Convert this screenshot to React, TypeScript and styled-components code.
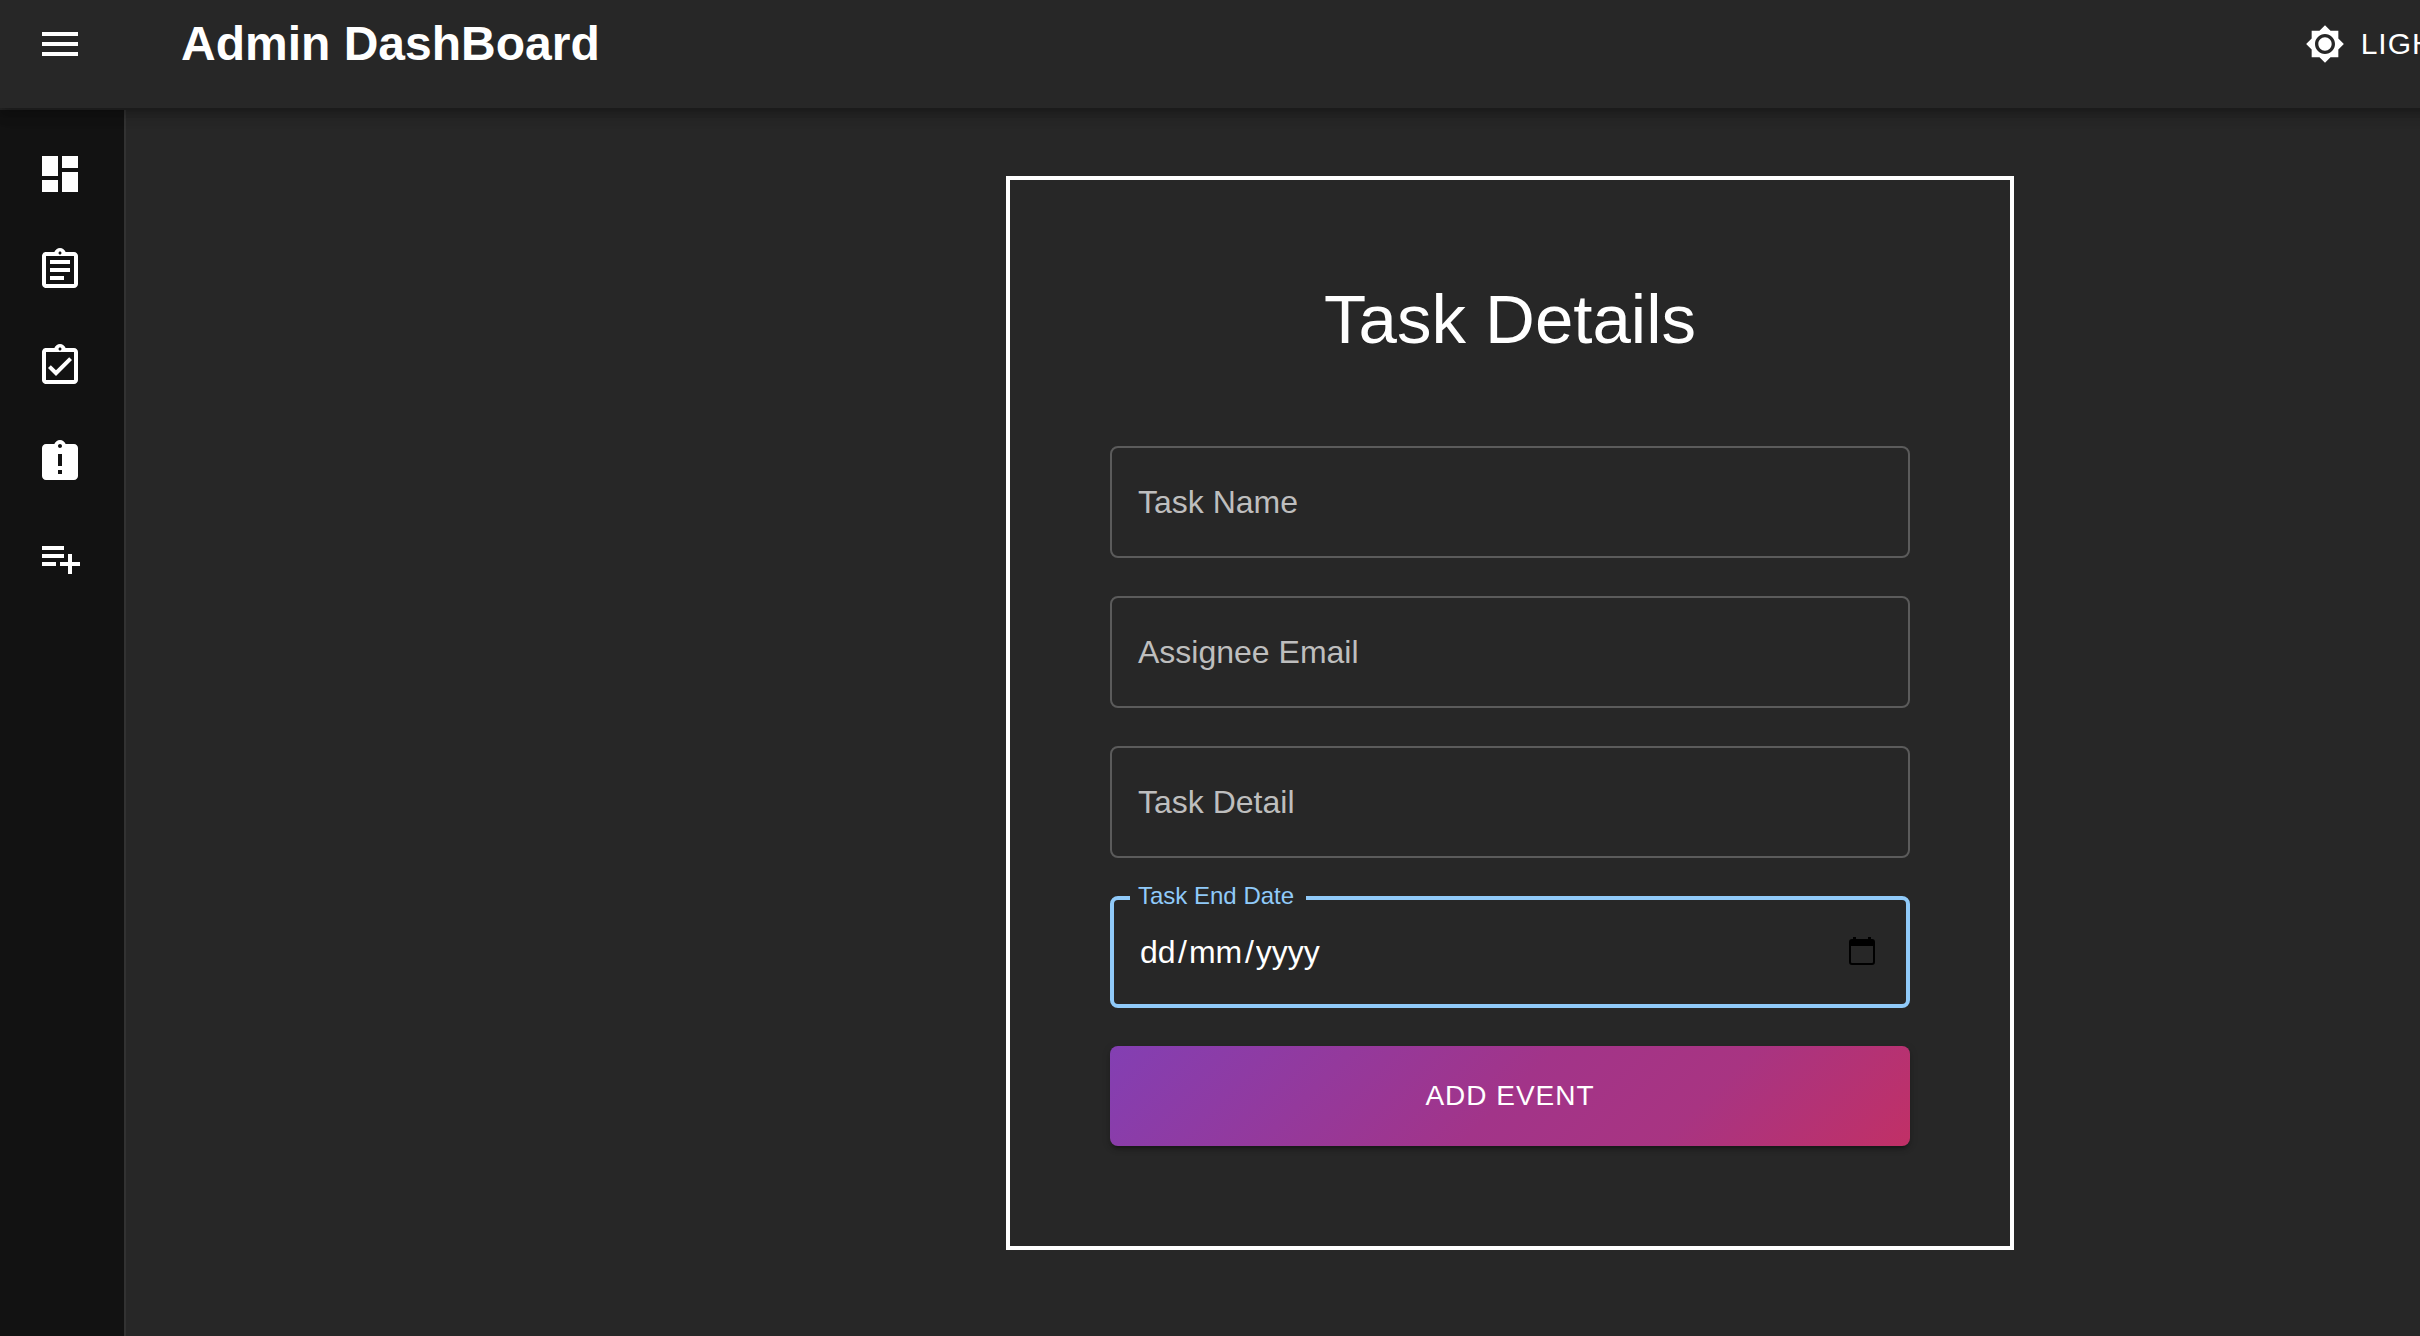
import React from 'react';
import styled, { createGlobalStyle } from 'styled-components';
import {
  MdAssignmentLate,
  MdBrightness7,
  MdDashboard,
  MdMenu,
  MdOutlineAssignment,
  MdOutlineAssignmentTurnedIn,
  MdPlaylistAdd,
} from 'react-icons/md';

const surface = '#272727';
const accent = '#90caf9';

const GlobalStyle = createGlobalStyle`
  *, *::before, *::after { box-sizing: border-box; }
  body {
    margin: 0;
    background: ${surface};
    color: #fff;
    font-family: "Liberation Sans", Arial, Helvetica, sans-serif;
    overflow-x: hidden;
  }
  button, input { font: inherit; color: inherit; }
`;

const Shell = styled.div`
  display: flex;
  flex-direction: column;
  width: 120%;
  min-height: 100vh;
`;

const Header = styled.header`
  display: flex;
  align-items: center;
  gap: 97px;
  height: 108px;
  padding: 0 450px 20px 36px;
  background: ${surface};
  box-shadow: 0 4px 8px -2px rgba(0, 0, 0, 0.2), 0 8px 10px 0 rgba(0, 0, 0, 0.14),
    0 2px 20px 0 rgba(0, 0, 0, 0.12);
  z-index: 1;
`;

const Brand = styled.h1`
  flex: 1;
  margin: 0;
  font-size: 48px;
  line-height: 64px;
`;

const PlainButton = styled.button`
  display: flex;
  align-items: center;
  padding: 0;
  border: 0;
  background: none;
  cursor: pointer;
`;

const ModeButton = styled(PlainButton)`
  gap: 16px;
  font-size: 30px;
  line-height: 52px;
  letter-spacing: 1px;
  white-space: nowrap;
`;

const Body = styled.div`
  display: flex;
  flex: 1;
  padding-top: 2px;
`;

const Sidebar = styled.nav`
  display: flex;
  flex-direction: column;
  gap: 48px;
  width: 126px;
  padding: 40px 36px;
  background: #121212;
  border-right: 2px solid #323232;
`;

const NavLink = styled.a`
  display: flex;
  color: inherit;
`;

const Main = styled.main`
  display: flex;
  flex: 1;
  justify-content: center;
  align-items: flex-start;
  padding: 66px 10px 66px 0;
`;

const Card = styled.form`
  display: flex;
  flex-direction: column;
  gap: 38px;
  width: 1008px;
  padding: 100px;
  border: 4px solid #fff;
`;

const CardTitle = styled.h2`
  margin: 0 0 48px;
  font-size: 69px;
  font-weight: 400;
  line-height: 80px;
  text-align: center;
`;

const Field = styled.div<{ $active?: boolean }>`
  position: relative;
  display: flex;
  align-items: center;
  height: 112px;
  padding: 0 ${(p) => (p.$active ? 24 : 26)}px;
  border: ${(p) => (p.$active ? `4px solid ${accent}` : '2px solid #5b5b5b')};
  border-radius: 8px;
`;

const FieldLabel = styled.label`
  position: absolute;
  left: 26px;
  color: #bebebe;
  font-size: 32px;
  line-height: 46px;
  pointer-events: none;
`;

const FloatingLabel = styled.label`
  position: absolute;
  top: -20px;
  left: 16px;
  padding: 0 12px 0 8px;
  background: ${surface};
  color: ${accent};
  font-size: 24px;
  line-height: 32px;
`;

const FieldInput = styled.input`
  flex: 1;
  min-width: 0;
  height: 46px;
  padding: 0;
  border: 0;
  outline: 0;
  background: none;
  font-size: 32px;
`;

const DateEdit = styled.div`
  display: flex;
  flex: 1;
  align-items: center;
  font-size: 32px;
  line-height: 46px;
`;

const DatePart = styled.input<{ $width: number }>`
  width: ${(p) => p.$width}px;
  height: 46px;
  padding: 0 2px;
  border: 0;
  outline: 0;
  background: none;

  &::placeholder {
    color: #fff;
    opacity: 1;
  }
`;

const PickerButton = styled(PlainButton)`
  padding: 4px;
  color: #000;
`;

const SubmitButton = styled.button`
  height: 100px;
  border: 0;
  border-radius: 8px;
  background: linear-gradient(135deg, #833fb3 0%, #a23489 50%, #a83482 72%, #c13066 100%);
  box-shadow: 0 6px 2px -4px rgba(0, 0, 0, 0.2), 0 4px 4px 0 rgba(0, 0, 0, 0.14),
    0 2px 10px 0 rgba(0, 0, 0, 0.12);
  font-size: 28px;
  letter-spacing: 1px;
  cursor: pointer;
`;

const navItems = [
  { label: 'Dashboard', Icon: MdDashboard },
  { label: 'All tasks', Icon: MdOutlineAssignment },
  { label: 'Completed tasks', Icon: MdOutlineAssignmentTurnedIn },
  { label: 'Overdue tasks', Icon: MdAssignmentLate },
  { label: 'Add task', Icon: MdPlaylistAdd },
];

const fields = [
  { id: 'task-name', label: 'Task Name', type: 'text' },
  { id: 'assignee-email', label: 'Assignee Email', type: 'email' },
  { id: 'task-detail', label: 'Task Detail', type: 'text' },
];

const CalendarIcon = () => (
  <svg width="32" height="32" viewBox="0 0 32 32" fill="none" aria-hidden="true">
    <path d="M8.5 1v4M23.5 1v4" stroke="currentColor" strokeWidth="3" />
    <rect x="4" y="4" width="24" height="24" rx="2" stroke="currentColor" strokeWidth="2" />
    <path d="M4 4h24v6H4z" fill="currentColor" />
  </svg>
);

export default function App() {
  return (
    <>
      <GlobalStyle />
      <Shell>
        <Header>
          <PlainButton type="button" aria-label="Open menu">
            <MdMenu size={48} />
          </PlainButton>
          <Brand>Admin DashBoard</Brand>
          <ModeButton type="button">
            <MdBrightness7 size={40} />
            LIGHT
          </ModeButton>
        </Header>
        <Body>
          <Sidebar aria-label="Main">
            {navItems.map(({ label, Icon }) => (
              <NavLink key={label} href="#" aria-label={label}>
                <Icon size={48} />
              </NavLink>
            ))}
          </Sidebar>
          <Main>
            <Card onSubmit={(event) => event.preventDefault()}>
              <CardTitle>Task Details</CardTitle>
              {fields.map(({ id, label, type }) => (
                <Field key={id}>
                  <FieldLabel htmlFor={id}>{label}</FieldLabel>
                  <FieldInput id={id} type={type} />
                </Field>
              ))}
              <Field $active>
                <FloatingLabel htmlFor="task-end-date">Task End Date</FloatingLabel>
                <DateEdit>
                  <DatePart id="task-end-date" $width={40} maxLength={2} placeholder="dd" />
                  <span>/</span>
                  <DatePart $width={58} maxLength={2} placeholder="mm" aria-label="Month" />
                  <span>/</span>
                  <DatePart $width={76} maxLength={4} placeholder="yyyy" aria-label="Year" />
                </DateEdit>
                <PickerButton type="button" aria-label="Choose date">
                  <CalendarIcon />
                </PickerButton>
              </Field>
              <SubmitButton type="submit">ADD EVENT</SubmitButton>
            </Card>
          </Main>
        </Body>
      </Shell>
    </>
  );
}
